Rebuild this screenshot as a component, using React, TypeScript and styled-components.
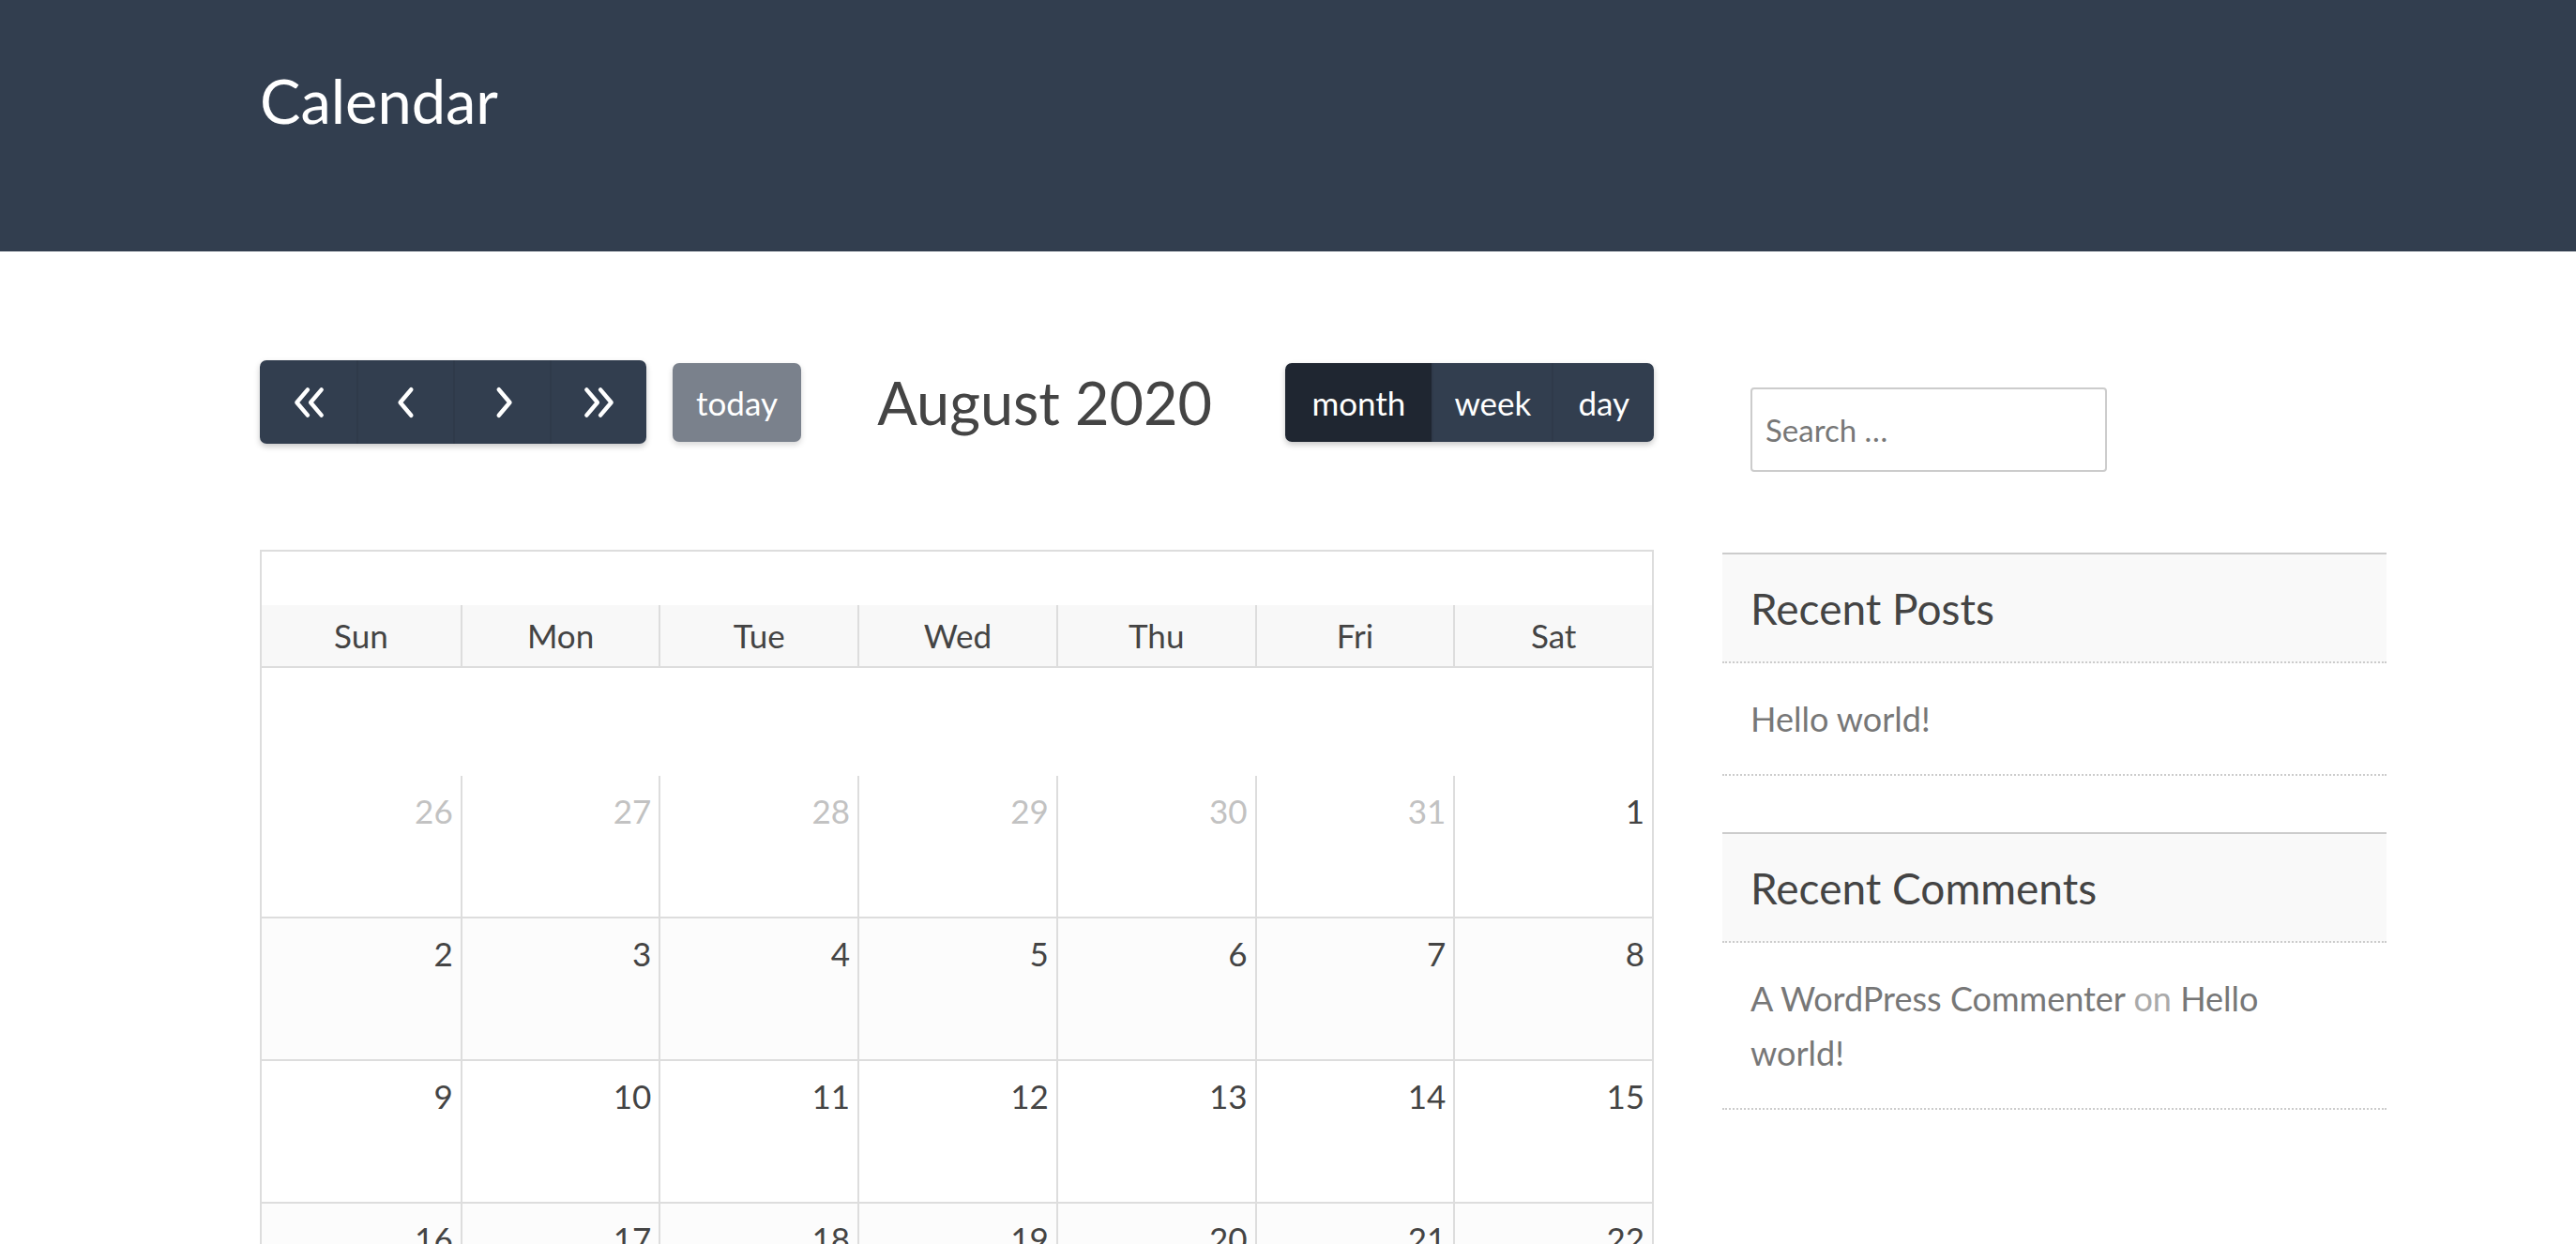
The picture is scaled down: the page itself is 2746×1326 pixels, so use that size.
import React from "react";
import styled, { createGlobalStyle } from "styled-components";

const GlobalStyle = createGlobalStyle`
  html, body {
    margin: 0;
    padding: 0;
    background: #ffffff;
  }
  body {
    font-family: Lato, "Open Sans", "Noto Sans", sans-serif;
    color: #444444;
    overflow: hidden;
  }
  * { box-sizing: border-box; }
`;

const SiteHeader = styled.header`
  background: #323e4f;
  height: 268px;
  padding: 68px 0 0 277px;
`;

const SiteTitle = styled.h1`
  margin: 0;
  font-size: 65px;
  line-height: 1.2;
  font-weight: 400;
  color: #ffffff;
`;

const Main = styled.main`
  display: flex;
  align-items: flex-start;
  gap: 73px;
  padding: 116px 0 0 277px;
`;

const CalendarColumn = styled.section`
  width: 1486px;
  flex: none;
`;

const Toolbar = styled.div`
  display: flex;
  align-items: center;
  justify-content: space-between;
  height: 89px;
  margin-bottom: 113px;
`;

const ToolbarChunk = styled.div`
  display: flex;
  align-items: center;
`;

const ButtonGroup = styled.div`
  display: flex;
  border-radius: 7px;
  overflow: hidden;
  box-shadow: 0 3px 6px rgba(0, 0, 0, 0.22);
`;

const NavButton = styled.button`
  width: 103px;
  height: 89px;
  border: none;
  border-left: 2px solid rgba(0, 0, 0, 0.06);
  background: #323e4f;
  color: #ffffff;
  display: flex;
  align-items: center;
  justify-content: center;
  padding: 0;
  &:first-child { border-left: none; }
`;

const TodayButton = styled.button`
  margin-left: 28px;
  height: 84px;
  padding: 0 25px;
  border: none;
  border-radius: 7px;
  background: #7a818c;
  color: #ffffff;
  font-family: inherit;
  font-size: 35px;
  box-shadow: 0 3px 6px rgba(0, 0, 0, 0.16);
`;

const ViewButton = styled.button<{ $active?: boolean; $pad: number }>`
  height: 84px;
  padding: 0 ${(p) => p.$pad}px;
  border: none;
  border-left: 2px solid rgba(0, 0, 0, 0.06);
  background: ${(p) => (p.$active ? "#1f2631" : "#323e4f")};
  color: #ffffff;
  font-family: inherit;
  font-size: 35px;
  &:first-child { border-left: none; }
`;

const MonthTitle = styled.h2`
  margin: 0 0 0 3px;
  font-size: 63px;
  line-height: 1.2;
  font-weight: 400;
  color: #444444;
`;

const Grid = styled.div`
  border: 2px solid #dddddd;
  border-bottom: none;
`;

const GridTopBand = styled.div`
  height: 57px;
`;

const HeaderRow = styled.div`
  display: grid;
  grid-template-columns: repeat(7, 1fr);
  background: #f8f8f8;
  border-bottom: 2px solid #dddddd;
`;

const HeaderCell = styled.div`
  height: 65px;
  padding-bottom: 2px;
  display: flex;
  align-items: center;
  justify-content: center;
  font-size: 35px;
  color: #444444;
  border-left: 2px solid #dddddd;
  &:first-child { border-left: none; }
`;

const GridGap = styled.div`
  height: 115px;
`;

const Week = styled.div<{ $shaded?: boolean }>`
  display: grid;
  grid-template-columns: repeat(7, 1fr);
  background: ${(p) => (p.$shaded ? "#fcfcfc" : "#ffffff")};
  border-bottom: 2px solid #dddddd;
`;

const DayCell = styled.div<{ $muted?: boolean }>`
  height: 150px;
  padding: 16px 8px 0 0;
  text-align: right;
  font-size: 35px;
  line-height: 1.2;
  color: ${(p) => (p.$muted ? "#c2c2c2" : "#444444")};
  border-left: 2px solid #dddddd;
  &:first-child { border-left: none; }
`;

const Sidebar = styled.aside`
  width: 708px;
  flex: none;
`;

const SearchWidget = styled.div`
  padding: 29px 30px 0;
  margin-bottom: 86px;
`;

const SearchInput = styled.input`
  width: 380px;
  height: 90px;
  border: 2px solid #cccccc;
  border-radius: 4px;
  padding: 0 14px;
  font-family: inherit;
  font-size: 33px;
  color: #444444;
  &::placeholder { color: #777777; }
`;

const Widget = styled.section`
  margin-bottom: 60px;
`;

const WidgetHeader = styled.div`
  height: 118px;
  background: #f9f9f9;
  border-top: 2px solid #cccccc;
  border-bottom: 2px dotted #cccccc;
  padding: 0 30px;
  display: flex;
  align-items: center;
`;

const WidgetTitle = styled.h3`
  margin: 0;
  font-size: 46px;
  font-weight: 400;
  color: #444444;
`;

const WidgetBody = styled.div`
  padding: 30px 80px 30px 30px;
  border-bottom: 2px dotted #cccccc;
  font-size: 36px;
  line-height: 58px;
  color: #777777;
`;

const WidgetLink = styled.a`
  color: #777777;
  text-decoration: none;
`;

const Muted = styled.span`
  color: #aaaaaa;
`;

type Dir = "first" | "prev" | "next" | "last";

/* Arrow glyphs for the navigation buttons */
const Chevron: React.FC<{ dir: Dir }> = ({ dir }) => {
  const paths: Record<Dir, string[]> = {
    first: ["M9 1.5 L3.5 8 L9 14.5", "M16 1.5 L10.5 8 L16 14.5"],
    prev: ["M10 1.5 L4.5 8 L10 14.5"],
    next: ["M5.5 1.5 L11 8 L5.5 14.5"],
    last: ["M3 1.5 L8.5 8 L3 14.5", "M10 1.5 L15.5 8 L10 14.5"],
  };
  const wide = dir === "first" || dir === "last";
  return (
    <svg
      width={wide ? 40 : 32}
      height={34}
      viewBox={wide ? "0 0 19 16" : "0 0 15 16"}
      fill="none"
      stroke="#ffffff"
      strokeWidth={2.1}
      strokeLinecap="round"
      strokeLinejoin="round"
    >
      {paths[dir].map((d) => (
        <path key={d} d={d} />
      ))}
    </svg>
  );
};

const dayNames = ["Sun", "Mon", "Tue", "Wed", "Thu", "Fri", "Sat"];

const weeks: { n: number; muted?: boolean }[][] = [
  [26, 27, 28, 29, 30, 31].map((n) => ({ n, muted: true })).concat([{ n: 1 }]),
  [2, 3, 4, 5, 6, 7, 8].map((n) => ({ n })),
  [9, 10, 11, 12, 13, 14, 15].map((n) => ({ n })),
  [16, 17, 18, 19, 20, 21, 22].map((n) => ({ n })),
];

export default function App() {
  return (
    <>
      <GlobalStyle />
      <SiteHeader>
        <SiteTitle>Calendar</SiteTitle>
      </SiteHeader>
      <Main>
        <CalendarColumn>
          <Toolbar>
            <ToolbarChunk>
              <ButtonGroup>
                <NavButton aria-label="previous year"><Chevron dir="first" /></NavButton>
                <NavButton aria-label="previous month"><Chevron dir="prev" /></NavButton>
                <NavButton aria-label="next month"><Chevron dir="next" /></NavButton>
                <NavButton aria-label="next year"><Chevron dir="last" /></NavButton>
              </ButtonGroup>
              <TodayButton>today</TodayButton>
            </ToolbarChunk>
            <MonthTitle>August 2020</MonthTitle>
            <ButtonGroup>
              <ViewButton $active $pad={28}>month</ViewButton>
              <ViewButton $pad={22}>week</ViewButton>
              <ViewButton $pad={26}>day</ViewButton>
            </ButtonGroup>
          </Toolbar>
          <Grid>
            <GridTopBand />
            <HeaderRow>
              {dayNames.map((d) => (
                <HeaderCell key={d}>{d}</HeaderCell>
              ))}
            </HeaderRow>
            <GridGap />
            {weeks.map((w, i) => (
              <Week key={i} $shaded={i % 2 === 1}>
                {w.map((d) => (
                  <DayCell key={`${i}-${d.n}`} $muted={d.muted}>
                    {d.n}
                  </DayCell>
                ))}
              </Week>
            ))}
          </Grid>
        </CalendarColumn>
        <Sidebar>
          <SearchWidget>
            <SearchInput placeholder="Search …" />
          </SearchWidget>
          <Widget>
            <WidgetHeader>
              <WidgetTitle>Recent Posts</WidgetTitle>
            </WidgetHeader>
            <WidgetBody>
              <WidgetLink href="#">Hello world!</WidgetLink>
            </WidgetBody>
          </Widget>
          <Widget>
            <WidgetHeader>
              <WidgetTitle>Recent Comments</WidgetTitle>
            </WidgetHeader>
            <WidgetBody>
              <WidgetLink href="#">A WordPress Commenter</WidgetLink> <Muted>on</Muted>{" "}
              <WidgetLink href="#">Hello world!</WidgetLink>
            </WidgetBody>
          </Widget>
        </Sidebar>
      </Main>
    </>
  );
}
